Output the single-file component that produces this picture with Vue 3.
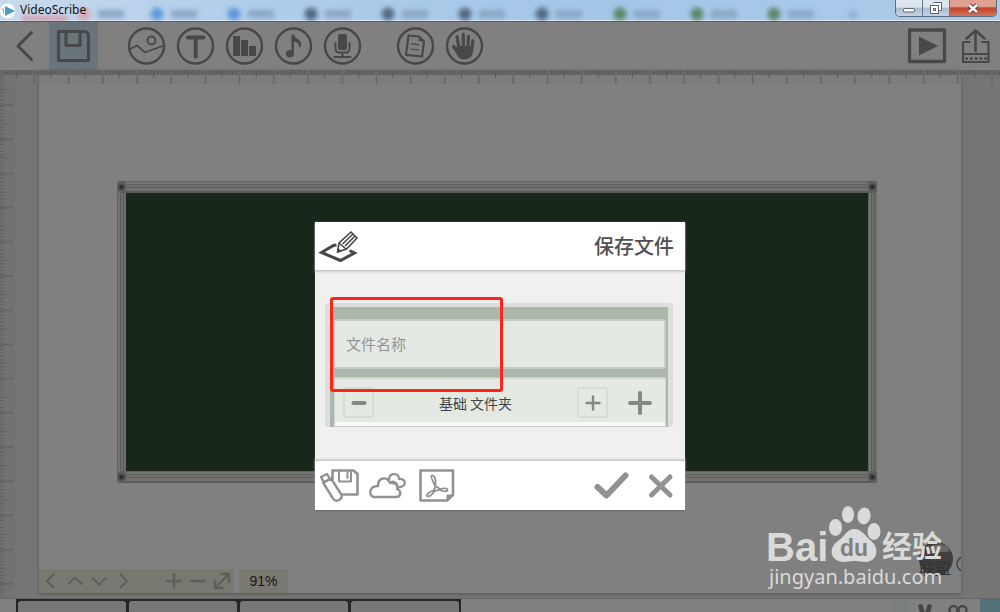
<script setup>
import { ref } from 'vue'

const fileName = ref('')
const tabs = [
  { x: 84, kind: 'red' },
  { x: 157, kind: 'blue' },
  { x: 234, kind: 'blue' },
  { x: 311, kind: 'dark' },
  { x: 388, kind: 'dark' },
  { x: 465, kind: 'dark' },
  { x: 542, kind: 'dark' },
  { x: 620, kind: 'green' },
  { x: 697, kind: 'green' },
  { x: 774, kind: 'green' }
]
const frames = [1, 2, 3, 4]
</script>

<template>
  <div class="window">
    <header class="titlebar">
      <svg class="tabs" width="1000" height="21" aria-hidden="true">
        <defs>
          <filter id="soft" x="-50%" y="-50%" width="200%" height="200%"><feGaussianBlur stdDeviation="2.4" /></filter>
        </defs>
        <g filter="url(#soft)">
          <g v-for="tab in tabs" :key="tab.x" :class="tab.kind">
            <circle :cx="tab.x" cy="14" r="6.500" class="fav" />
            <rect :x="tab.x + 14" y="10" width="26" height="8" class="label" />
          </g>
          <rect x="22" y="16" width="46" height="5" fill="#d59aa8" />
          <circle cx="853" cy="15" r="4" fill="#8ea9c6" />
        </g>
      </svg>
      <svg class="logo" width="16" height="16" viewBox="0 0 16 16" aria-hidden="true">
        <circle cx="7.500" cy="8" r="7.500" fill="#fff" />
        <path d="M5 3 15 8 5 13Z" fill="#4a9cc0" />
        <path d="M2 5 4 6V11L3 10Z" fill="#7fc0cf" />
      </svg>
      <span class="app-name">VideoScribe</span>
      <div class="sys">
        <button class="sys-btn min" aria-label="Minimize">
          <svg width="14" height="14" viewBox="0 0 14 14"><rect x="1.500" y="7.500" width="11" height="3.500" rx="1" fill="#fff" stroke="#5b6375" /></svg>
        </button>
        <button class="sys-btn max" aria-label="Restore">
          <svg width="14" height="14" viewBox="0 0 14 14"><path d="M4.500 1.500H12.500V9.500H10.500" fill="#fff" stroke="#5b6375" /><rect x="1.500" y="4.500" width="8" height="8" fill="#fff" stroke="#5b6375" /><rect x="4.500" y="7.500" width="2" height="2" fill="none" stroke="#5b6375" /></svg>
        </button>
        <button class="sys-btn close" aria-label="Close">
          <svg width="14" height="14" viewBox="0 0 14 14"><path d="M3 4 11 11M11 4 3 11" stroke="#5a3a44" stroke-width="4.500" /><path d="M3 4 11 11M11 4 3 11" stroke="#fff" stroke-width="2.600" /></svg>
        </button>
      </div>
    </header>

    <nav class="toolbar">
      <button aria-label="Back"><svg viewBox="0 0 49 49"><path d="M31.500 11.500 18 25 31.500 38.500" stroke-width="3" /></svg></button>
      <button class="active" aria-label="Save"><svg viewBox="0 0 49 49"><path d="M9.500 10.500H35Q39.500 10.500 39.500 15V39.500H9.500ZM17 11V24.500H31V11" stroke-width="3.200" /></svg></button>
      <span class="gap"></span>
      <button aria-label="Image"><svg viewBox="0 0 49 49"><circle cx="24.500" cy="25" r="17.500" /><circle cx="29.500" cy="19.500" r="4" stroke-width="2" /><path d="M8 28 15 24.500 23 31.500 40.500 25" stroke-width="1.700" /></svg></button>
      <button aria-label="Text"><svg viewBox="0 0 49 49"><circle cx="24.500" cy="25" r="17.500" /><path d="M17 16.500H32.500M24.700 16.500V35.500" stroke-width="4" /></svg></button>
      <button aria-label="Chart"><svg viewBox="0 0 49 49"><circle cx="24.500" cy="25" r="17.500" /><path class="solid" d="M13 15H20V35H13ZM21 19H28V35H21ZM29 25H36V35H29Z" /></svg></button>
      <button aria-label="Music"><svg viewBox="0 0 49 49"><circle cx="24.500" cy="25" r="17.500" /><ellipse class="solid" cx="20.800" cy="32.800" rx="4" ry="3.800" /><path class="solid" d="M22.500 13.500H25C25.500 18 33.500 18 32 24.500L30 27C30.500 23 29 21.500 25 20.500V33H22.500Z" /></svg></button>
      <button aria-label="Voice"><svg viewBox="0 0 49 49"><circle cx="24.500" cy="25" r="17.500" /><rect class="solid" x="20" y="13" width="9" height="16" rx="2" /><path d="M17.500 22V27Q17.500 31.500 21 31.500H28Q31.500 31.500 31.500 27V22M24.500 32V35M16.500 36H32.500" stroke-width="2" /></svg></button>
      <span class="gap"></span>
      <button aria-label="Notes"><svg viewBox="0 0 49 49"><circle cx="24.500" cy="25" r="17.500" /><path d="M17.500 14.500 28 15.500 33 20.500 31 35.500 15 33.800Z" stroke-width="2.200" /><path d="M20.500 22.800 27.500 23.700M19.500 28 27.500 28.800" stroke-width="1.200" /><path class="solid" d="M28 15.500 33 20.500 27.500 20Z" /></svg></button>
      <button aria-label="Hand"><svg viewBox="0 0 49 49"><circle cx="24.500" cy="25" r="17.500" /><path d="M17 15.500 19 27M23.300 13V27M28.500 15 27.800 27M32.800 19.800 31.500 30M13.500 25.500 19 33" stroke-width="3.200" /><path class="solid" d="M17.500 25H32.500L33 31Q32 38 24.500 38.500 19.500 38.500 17 34L14 28Z" /></svg></button>
      <span class="spacer"></span>
      <button aria-label="Play"><svg viewBox="0 0 49 49"><rect x="7.500" y="9" width="35" height="31.500" stroke-width="3.300" /><path class="solid" d="M17 15.500 36 25 17 34.500Z" /></svg></button>
      <button aria-label="Share"><svg viewBox="0 0 49 49"><path d="M24.500 10V30M15.500 17.500 24.500 9.500 33.500 17.500" stroke-width="2.600" /><path d="M18.500 21H12V41H37.500V21H31M12 33H37" stroke-width="2.200" /><path d="M15.500 37.500H37" stroke-width="3.200" stroke-dasharray="0 4.800" /></svg></button>
    </nav>

    <main class="workspace">
      <svg class="ruler-v" aria-hidden="true">
        <defs>
          <pattern id="rv" width="13" height="34.200" y="0.800" patternUnits="userSpaceOnUse">
            <path d="M0 1.700H4M0 5.100H4M0 8.500H4M0 12H4M0 15.400H4M0 22.200H4M0 25.600H4M0 29H4M0 32.400H4M0 18.800H6.500M0 34.200H13M0 0H13" stroke="#626262" stroke-width="1.300" />
          </pattern>
        </defs>
        <rect width="13" height="100%" fill="url(#rv)" />
      </svg>
      <svg class="ruler-h" aria-hidden="true">
        <defs>
          <pattern id="rh" width="34.200" height="14" x="17.200" patternUnits="userSpaceOnUse">
            <path d="M0.400 0V5M3.800 0V5M7.200 0V5M10.600 0V5M14 0V5M20.800 0V5M24.200 0V5M27.600 0V5M31 0V5M34 0V8" stroke="#5c5c5c" stroke-width="1.700" />
            <path d="M17.200 0V14" stroke="#666" stroke-width="1.600" />
          </pattern>
        </defs>
        <rect width="100%" height="5" fill="#6b6b6b" />
        <rect width="100%" height="14" fill="url(#rh)" />
      </svg>
      <section class="page">
        <div class="board">
          <i class="corner tl"></i><i class="corner tr"></i><i class="corner bl"></i><i class="corner br"></i>
          <div class="rail"></div>
          <div class="middle"><div class="post"></div><div class="slate"></div><div class="post"></div></div>
          <div class="rail"></div>
        </div>
        <div class="view-tools">
          <div class="pan">
            <button aria-label="Left"><svg viewBox="0 0 24 24"><path d="M15 5 8 12 15 19" /></svg></button>
            <button aria-label="Up"><svg viewBox="0 0 24 24"><path d="M5 15.500 12 8.500 19 15.500" /></svg></button>
            <button aria-label="Down"><svg viewBox="0 0 24 24"><path d="M5 8.500 12 15.500 19 8.500" /></svg></button>
            <button aria-label="Right"><svg viewBox="0 0 24 24"><path d="M9 5 16 12 9 19" /></svg></button>
            <span class="spacer"></span>
            <button aria-label="Zoom in"><svg viewBox="0 0 24 24"><path d="M4.500 12H19.500M12 4.500V19.500" stroke-width="2.600" /></svg></button>
            <button aria-label="Zoom out"><svg viewBox="0 0 24 24"><path d="M4.500 12H19.500" stroke-width="2.600" /></svg></button>
            <button aria-label="Fit"><svg viewBox="0 0 24 24"><path d="M5 19 19 5M10.500 5H19V13.500M5 10.500V19H13.500" stroke-width="2.400" /></svg></button>
          </div>
          <span class="zoom">91%</span>
        </div>
      </section>
    </main>

    <footer class="timeline">
      <ol class="frames"><li v-for="f in frames" :key="f"></li></ol>
      <span class="spacer"></span>
      <span class="chip"></span>
      <div class="edit">
        <svg width="72" height="14" viewBox="0 0 72 14" aria-hidden="true">
          <path d="M10 6 14 5 17 14H12ZM24 6 20 5 17 14H22Z" fill="#454545" />
          <g fill="none" stroke="#484848" stroke-width="2.500"><circle cx="45.500" cy="11" r="4" /><circle cx="54.500" cy="11" r="4" /></g>
        </svg>
      </div>
      <span class="teal"></span>
    </footer>

    <svg class="watermark" width="202" height="100" viewBox="0 0 202 100" role="img" aria-label="Baidu jingyan">
      <circle cx="176" cy="60" r="17" fill="#3f3f3f" />
      <path d="M169 51Q178 55 190 52L187 47Q180 43 170 48Z" fill="#686868" />
      <text x="159" y="75" class="cjk" font-size="16" fill="#333">联盟</text>
      <path d="M201 58Q193 65 201 72" fill="none" stroke="#444" stroke-width="1.500" />
      <g fill="#dadada">
        <text x="6" y="62" class="latin" font-size="40">Bai</text>
        <g transform="translate(-20 -9)">
          <ellipse cx="95.500" cy="37.500" rx="6.500" ry="8.500" />
          <ellipse cx="108" cy="24.500" rx="6" ry="8.500" />
          <ellipse cx="124" cy="26" rx="6.500" ry="8.500" transform="rotate(10 124 26)" />
          <ellipse cx="134" cy="41.500" rx="6.500" ry="8.500" />
          <path d="M114.500 39C121 39 125 45 130 50 140 57 138 71 126 72 120 72 118 71 114 71 110 71 107 72 103 72 90 71 88 58 98 51 104 47 107 39 114.500 39Z" />
        </g>
        <text x="122" y="58" class="cjk bold" font-size="30">经验</text>
        <text x="9" y="85" class="url" font-size="20">jingyan.baidu.com</text>
      </g>
      <text x="80" y="57" class="latin" font-size="23" fill="#808080">du</text>
    </svg>

    <div class="overlay">
      <form class="dialog" role="dialog" aria-labelledby="dialog-title" @submit.prevent>
        <header class="dialog-head">
          <svg width="49" height="49" viewBox="0 0 49 49" aria-hidden="true" fill="none" stroke="#484848">
            <path d="M21.500 23 18.500 23.500 6.500 30.500 25.500 38.500 39.500 31 34.500 28.500" stroke-width="3" />
            <path d="M22.500 30 24 21 36 10 42 16 31.500 27ZM24 21 31 27M27.500 22 38 12M30 24 40 14" stroke-width="1.600" />
            <path d="M22 31 23 26 27 29Z" fill="#484848" stroke="none" />
          </svg>
          <h1 id="dialog-title">保存文件</h1>
        </header>
        <div class="dialog-body">
          <div class="card">
            <input v-model="fileName" type="text" aria-label="文件名称" placeholder="文件名称" />
            <div class="folder">
              <button type="button" class="box" aria-label="Previous folder"><svg viewBox="0 0 30 30"><path d="M9.500 15H20.500" stroke-width="4" /></svg></button>
              <span class="folder-name">基础 文件夹</span>
              <button type="button" class="box" aria-label="Next folder"><svg viewBox="0 0 30 30"><path d="M8.500 15H21.500M15 8.500V21.500" stroke-width="2.400" /></svg></button>
              <button type="button" class="add" aria-label="New folder"><svg viewBox="0 0 30 30"><path d="M5 15H25M15 5V25" stroke-width="4" /></svg></button>
            </div>
          </div>
          <div class="highlight"></div>
        </div>
        <footer class="dialog-foot">
          <button type="button" aria-label="Local disk"><svg viewBox="0 0 49 49"><path d="M17.500 18V9.500H38.500L42.500 13V33.500H28" stroke-width="2.600" /><path d="M24 10V20.500H36V10M32.500 10V17" stroke-width="2" /><path d="M6 16 12 13 15 18 9 21.500ZM8 21.500 16 17.500 26 33Q28 37 24 39 20 41 18 37.500Z" stroke-width="2.400" /></svg></button>
          <button type="button" aria-label="Cloud"><svg viewBox="0 0 49 49"><path d="M10 36H32C37 36 38 30 33 28 35 22 29 19 26 22 23 15 14 16 14 25 5 25 4 35 10 36ZM25 18C26 11 35 12 35 18 42 17 43 25 36 26M28 22Q33 22 34 27" stroke-width="2.400" /></svg></button>
          <button type="button" aria-label="PDF"><svg viewBox="0 0 49 49"><path d="M7.500 9.500H40V34L34 39.500H7.500Z" stroke-width="2.600" /><path d="M34 40V34H40Z" fill="#929292" stroke-width="1" /><path d="M22.500 26C21 22 17.500 16.500 18.500 14.800 20 13.500 22.500 16 22.500 20V25L27 28C31 27 35 27 34.500 29 33.500 31 30 30.500 26.500 28.800L21.500 30C19 34 16 36.500 14 35 13 33.500 17 30.500 20.500 29.500Z" stroke-width="1.800" /></svg></button>
          <span class="spacer"></span>
          <button type="submit" aria-label="Confirm"><svg viewBox="0 0 49 49"><path d="M10.500 26 19.500 34.500 38.500 14.500" stroke-width="6" /></svg></button>
          <button type="button" aria-label="Cancel"><svg viewBox="0 0 49 49"><path d="M15.500 16 34 34M34 16 15.500 34" stroke-width="5" /></svg></button>
        </footer>
      </form>
    </div>
  </div>
</template>

<style>
body { margin: 0; }
</style>

<style scoped>
* { box-sizing: border-box; }
.window { position: relative; display: flex; flex-direction: column; min-height: 100vh; background: #757575; overflow: hidden; font-family: "Liberation Sans", "Noto Sans CJK SC", sans-serif; }
button { padding: 0; border: 0; background: none; display: flex; align-items: center; justify-content: center; }
.spacer { flex: 1; }

.titlebar { position: relative; display: flex; align-items: center; height: 21px; background: linear-gradient(90deg, #c8daec 0, #b0cdeb 25%, #a3c6e8 60%, #accbea 100%); border-bottom: 1px solid #dcebf8; }
.tabs { position: absolute; left: 0; top: 0; }
.label { fill: #8ba6c5; }
.blue .fav { fill: #5e97dc; }
.dark .fav { fill: #526780; }
.green .fav { fill: #5a8767; }
.red .fav { fill: #d8a8b8; }
.logo { position: relative; margin-top: 1px; }
.app-name { position: relative; margin-left: 4px; font: 12px/20px "Noto Sans", "Open Sans", sans-serif; color: #111; }
.sys { position: relative; align-self: flex-start; display: flex; margin: 0 3px 0 auto; border: 1px solid #5f6c7d; border-top: 0; border-radius: 0 0 5px 5px; overflow: hidden; }
.sys-btn { width: 27px; height: 16px; background: linear-gradient(#dce5ee 0 45%, #adbccc 50%, #c4d3e3); border-right: 1px solid #6b788a; }
.sys-btn.close { width: 46px; border-right: 0; background: linear-gradient(#e0a193 0 40%, #c3452c 50%, #d5735c); }

.toolbar { display: flex; height: 49px; background: #808080; border-top: 1px solid #5c5c5c; box-shadow: 0 1px 2px #555; }
.toolbar button { width: 49px; height: 48px; }
.toolbar button.active { background: #69757b; }
.toolbar svg { width: 49px; height: 49px; fill: none; stroke: #484848; stroke-width: 2.400; stroke-linecap: round; stroke-linejoin: round; margin-top: -1px; }
.toolbar svg .solid { fill: #484848; stroke: none; }
.gap { width: 24px; }

.workspace { position: relative; flex: 1; display: flex; padding: 0 39px 5px; }
.ruler-h { position: absolute; left: 0; top: 0; width: 100%; height: 14px; background: #7777774d; z-index: 1; }
.ruler-v { position: absolute; left: 0; top: 0; width: 15px; height: 100%; background: #727272; }
.page { flex: 1; display: flex; flex-direction: column; padding-top: 111px; background: #808080; box-shadow: 0 1px 3px #555; }
.board { position: relative; flex: 1; display: flex; flex-direction: column; margin: 0 84px 86px 78px; }
.rail { height: 12px; background: linear-gradient(#61615f 0 1px, #747472 1px 3px, #5f5f5d 3px 4px, #6e6e6c 4px 6px, #5d5d5b 6px 7px, #71716f 7px 10px, #5b5b59 10px); border-radius: 3px; }
.middle { flex: 1; display: flex; }
.post { width: 9px; background: linear-gradient(90deg, #60605e 0 1px, #74746f 1px 3px, #5b5b59 3px 4px, #6e6e6c 4px 6px, #5a5a58 6px 7px, #6d6d6b 7px); }
.slate { flex: 1; background: #19271b; }
.corner { position: absolute; z-index: 1; width: 9px; height: 12px; background: radial-gradient(circle, #2c2c2c 0 1px, #5d5d5b 4px); border-radius: 3px; }
.tl { left: 0; top: 0; }
.tr { right: 0; top: 0; }
.bl { left: 0; bottom: 0; }
.br { right: 0; bottom: 0; }

.view-tools { display: flex; gap: 5px; height: 24px; }
.pan { display: flex; width: 195px; background: #7a7971; }
.pan button { width: 24px; height: 24px; }
.pan svg { width: 24px; height: 24px; fill: none; stroke: #5f5e58; stroke-width: 2; }
.zoom { width: 49px; background: #7a7971; color: #151515; font-size: 14px; line-height: 25px; text-align: center; }

.timeline { position: relative; display: flex; height: 14px; background: #808080; border-top: 1px solid #666; }
.frames { display: flex; margin: 0 0 0 16px; padding: 2px 0 0 2px; gap: 3px; list-style: none; background: #262626; border-right: 2px solid #262626; }
.frames li { width: 108px; background: #777; border-radius: 3px 3px 0 0; }
.chip { width: 18px; background: #7a7f7d; }
.edit { width: 72px; }
.teal { width: 20px; background: #54717a; }

.watermark { position: absolute; right: 38px; bottom: 13px; }
.latin { font-family: "Liberation Sans", sans-serif; font-weight: 700; }
.cjk { font-family: "Noto Sans CJK SC", sans-serif; }
.bold { font-weight: 700; }
.url { font-family: "Noto Sans", sans-serif; }

.overlay { position: absolute; z-index: 2; inset: 0; display: flex; justify-content: center; align-items: flex-start; padding-top: 222px; }
.dialog { width: 370px; background: #f0f0f0; box-shadow: 0 0 2px #333; }
.dialog-head { display: flex; align-items: center; justify-content: space-between; height: 49px; padding-right: 11px; background: #fff; border-bottom: 1px solid #c8c8c8; box-shadow: 0 1px 2px #ccc; }
h1 { margin: 0; font-family: "Noto Sans CJK SC", sans-serif; font-size: 20px; font-weight: 500; line-height: 30px; color: #505050; }
.dialog-body { position: relative; padding: 32px 12px 33px 10px; }
.card { padding: 12px 2px 0 4px; border: 5px solid #dedede; border-top-width: 4px; border-bottom: 0; background: #abb7ab; border-radius: 3px; }
input { display: block; width: 100%; height: 50px; padding: 0 11px 2px; border: 2px solid #c5ccc6; border-left-width: 1px; border-radius: 2px; background: #e4e9e4; font-family: "Noto Sans CJK SC", sans-serif; font-size: 15px; color: #444; outline: none; }
input::placeholder { color: #929693; opacity: 1; }
.folder { display: flex; align-items: center; height: 50px; margin-top: 8px; padding: 0 10px 0 8px; background: linear-gradient(#e4e9e4 0 43px, #f8f9f8 43px); border: 1px solid #d0d5d0; border-bottom-color: #ccc; border-top-width: 2px; }
.folder svg { width: 30px; height: 30px; fill: none; stroke: #858885; stroke-linecap: round; }
.box { width: 31px; height: 31px; border: 2px solid #d8dcd8; border-radius: 3px; }
.box svg { flex: none; }
.folder-name { flex: 1; font-family: "Noto Sans CJK SC", sans-serif; font-size: 14px; line-height: 20px; text-align: center; color: #444; }
.add { width: 30px; height: 30px; margin-left: 17px; }
.highlight { position: absolute; left: 15px; top: 26px; width: 173px; height: 95px; border: 3px solid #ff2318; border-radius: 3px; pointer-events: none; }
.dialog-foot { display: flex; height: 50px; background: #fff; border-top: 1px solid #c8c8c8; box-shadow: 0 -1px 2px #ccc; }
.dialog-foot svg { width: 49px; height: 49px; fill: none; stroke: #929292; stroke-linecap: round; stroke-linejoin: round; }
</style>
